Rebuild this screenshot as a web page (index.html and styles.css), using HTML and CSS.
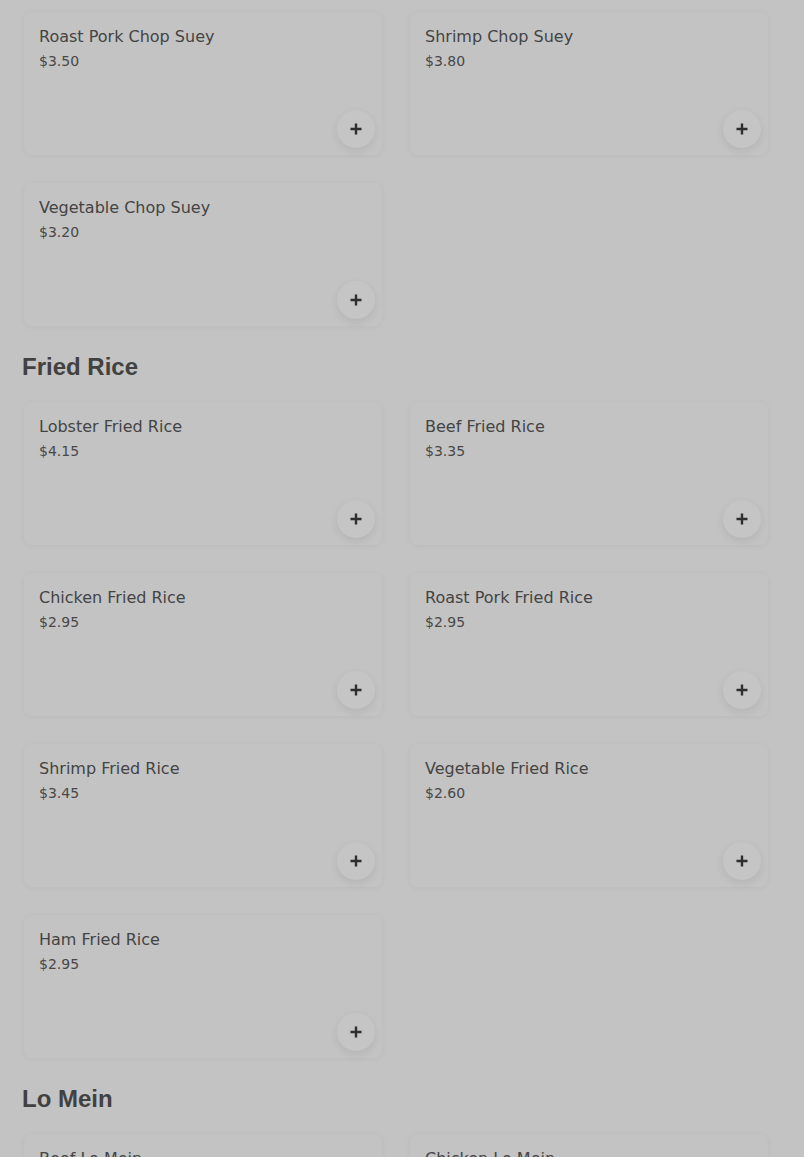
FILE: index.html
```html
<!DOCTYPE html>
<html>
<head>
<meta charset="utf-8">
<link rel="stylesheet" href="styles.css">
</head>
<body>
<main class="menu">
  <section class="section first">
    <div class="grid">
      <div class="card"><div class="name">Roast Pork Chop Suey</div><div class="price">$3.50</div><button class="add"><svg width="14" height="14" viewBox="0 0 14 14"><path d="M7 1.5v11M1.5 7h11" stroke="#2e2e2e" stroke-width="2.4"/></svg></button></div>
      <div class="card"><div class="name">Shrimp Chop Suey</div><div class="price">$3.80</div><button class="add"><svg width="14" height="14" viewBox="0 0 14 14"><path d="M7 1.5v11M1.5 7h11" stroke="#2e2e2e" stroke-width="2.4"/></svg></button></div>
      <div class="card"><div class="name">Vegetable Chop Suey</div><div class="price">$3.20</div><button class="add"><svg width="14" height="14" viewBox="0 0 14 14"><path d="M7 1.5v11M1.5 7h11" stroke="#2e2e2e" stroke-width="2.4"/></svg></button></div>
    </div>
  </section>
  <section class="section">
    <h2 class="heading">Fried Rice</h2>
    <div class="grid">
      <div class="card"><div class="name">Lobster Fried Rice</div><div class="price">$4.15</div><button class="add"><svg width="14" height="14" viewBox="0 0 14 14"><path d="M7 1.5v11M1.5 7h11" stroke="#2e2e2e" stroke-width="2.4"/></svg></button></div>
      <div class="card"><div class="name">Beef Fried Rice</div><div class="price">$3.35</div><button class="add"><svg width="14" height="14" viewBox="0 0 14 14"><path d="M7 1.5v11M1.5 7h11" stroke="#2e2e2e" stroke-width="2.4"/></svg></button></div>
      <div class="card"><div class="name">Chicken Fried Rice</div><div class="price">$2.95</div><button class="add"><svg width="14" height="14" viewBox="0 0 14 14"><path d="M7 1.5v11M1.5 7h11" stroke="#2e2e2e" stroke-width="2.4"/></svg></button></div>
      <div class="card"><div class="name">Roast Pork Fried Rice</div><div class="price">$2.95</div><button class="add"><svg width="14" height="14" viewBox="0 0 14 14"><path d="M7 1.5v11M1.5 7h11" stroke="#2e2e2e" stroke-width="2.4"/></svg></button></div>
      <div class="card"><div class="name">Shrimp Fried Rice</div><div class="price">$3.45</div><button class="add"><svg width="14" height="14" viewBox="0 0 14 14"><path d="M7 1.5v11M1.5 7h11" stroke="#2e2e2e" stroke-width="2.4"/></svg></button></div>
      <div class="card"><div class="name">Vegetable Fried Rice</div><div class="price">$2.60</div><button class="add"><svg width="14" height="14" viewBox="0 0 14 14"><path d="M7 1.5v11M1.5 7h11" stroke="#2e2e2e" stroke-width="2.4"/></svg></button></div>
      <div class="card"><div class="name">Ham Fried Rice</div><div class="price">$2.95</div><button class="add"><svg width="14" height="14" viewBox="0 0 14 14"><path d="M7 1.5v11M1.5 7h11" stroke="#2e2e2e" stroke-width="2.4"/></svg></button></div>
    </div>
  </section>
  <section class="section">
    <h2 class="heading">Lo Mein</h2>
    <div class="grid">
      <div class="card"><div class="name">Beef Lo Mein</div><div class="price">$3.35</div><button class="add"><svg width="14" height="14" viewBox="0 0 14 14"><path d="M7 1.5v11M1.5 7h11" stroke="#2e2e2e" stroke-width="2.4"/></svg></button></div>
      <div class="card"><div class="name">Chicken Lo Mein</div><div class="price">$2.95</div><button class="add"><svg width="14" height="14" viewBox="0 0 14 14"><path d="M7 1.5v11M1.5 7h11" stroke="#2e2e2e" stroke-width="2.4"/></svg></button></div>
    </div>
  </section>
</main>
</body>
</html>
```
FILE: styles.css
```css
html, body {
  margin: 0;
  padding: 0;
  background: #c3c3c3;
}
body {
  font-family: "DejaVu Sans", sans-serif;
  color: #444;
  overflow: hidden;
  height: 1157px;
}
.menu {
  padding: 12px 36px 0 24px;
}
.section {
  margin-top: 28px;
}
.section.first {
  margin-top: 0;
}
.heading {
  font-family: "Liberation Sans", Arial, sans-serif;
  font-weight: bold;
  font-size: 24px;
  line-height: 26px;
  color: #414141;
  margin: 0 0 22px -2px;
}
.grid {
  display: grid;
  grid-template-columns: 358px 358px;
  column-gap: 28px;
  row-gap: 28px;
}
.card {
  position: relative;
  height: 143px;
  box-sizing: border-box;
  padding: 15px 15px;
  background: #c3c3c3;
  border-radius: 8px;
  box-shadow: 0 1px 6px rgba(0, 0, 0, 0.045);
}
.name {
  font-size: 16px;
  line-height: 19px;
  color: #444;
}
.price {
  font-size: 14px;
  line-height: 17px;
  margin-top: 7px;
  color: #484848;
}
.add {
  position: absolute;
  right: 7px;
  bottom: 7px;
  width: 38px;
  height: 38px;
  border-radius: 50%;
  border: none;
  padding: 0;
  background: #c5c5c5;
  box-shadow: 0 3px 8px rgba(0, 0, 0, 0.08);
  display: flex;
  align-items: center;
  justify-content: center;
}
.add svg {
  display: block;
}
```
